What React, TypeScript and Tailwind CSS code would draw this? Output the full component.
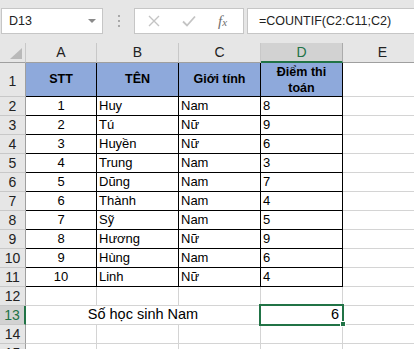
import React from 'react';

type Student = { stt: number; name: string; sex: string; score: number };

const students: Student[] = [
  { stt: 1, name: 'Huy', sex: 'Nam', score: 8 },
  { stt: 2, name: 'Tú', sex: 'Nữ', score: 9 },
  { stt: 3, name: 'Huyền', sex: 'Nữ', score: 6 },
  { stt: 4, name: 'Trung', sex: 'Nam', score: 3 },
  { stt: 5, name: 'Dũng', sex: 'Nam', score: 7 },
  { stt: 6, name: 'Thành', sex: 'Nam', score: 4 },
  { stt: 7, name: 'Sỹ', sex: 'Nam', score: 5 },
  { stt: 8, name: 'Hương', sex: 'Nữ', score: 9 },
  { stt: 9, name: 'Hùng', sex: 'Nam', score: 6 },
  { stt: 10, name: 'Linh', sex: 'Nữ', score: 4 },
];

const RowHead = ({ n, selected }: { n: number; selected?: boolean }) => (
  <div
    className={
      selected
        ? 'w-[26px] shrink-0 flex items-center justify-center border-b border-b-[#c8c8c8] border-r-2 border-r-[#217346] bg-[#d2d2d2] text-[#217346] text-[14px]'
        : 'w-[26px] shrink-0 flex items-center justify-center border-b border-b-[#c8c8c8] border-r border-r-[#9f9f9f] bg-[#e6e6e6] text-[#222] text-[14px]'
    }
  >
    {n}
  </div>
);

const ColHead = ({ label, w, selected }: { label: string; w: string; selected?: boolean }) => (
  <div
    className={`${w} shrink-0 flex items-center justify-center text-[14px] ${
      selected
        ? 'bg-[#d2d2d2] text-[#217346] border-b-2 border-b-[#217346] border-r border-r-[#ababab]'
        : 'bg-[#e6e6e6] text-[#222] border-b border-b-[#9f9f9f] border-r border-r-[#c8c8c8]'
    }`}
  >
    {label}
  </div>
);

const EmptyRow = ({ n }: { n: number }) => (
  <div className="flex h-[19px]">
    <RowHead n={n} />
    <div className="w-[71px] shrink-0 border-r border-b border-[#d4d4d4]" />
    <div className="w-[82px] shrink-0 border-r border-b border-[#d4d4d4]" />
    <div className="w-[82px] shrink-0 border-r border-b border-[#d4d4d4]" />
    <div className="w-[82px] shrink-0 border-r border-b border-[#d4d4d4]" />
    <div className="w-[80px] shrink-0 border-b border-[#d4d4d4]" />
  </div>
);

export default function App() {
  return (
    <div className="w-[414px] h-[349px] overflow-hidden bg-white font-['Liberation_Sans',Arial,sans-serif] text-black select-none">
      {/* formula bar */}
      <div className="h-[43px] bg-[#e6e6e6] flex items-start pt-[8px] pl-[1px]">
        <div className="w-[102px] h-[26px] bg-white border border-[#c6c6c6] flex items-center pl-[7px] pr-[6px] text-[12.5px] text-[#222]">
          <span className="flex-1">D13</span>
          <span className="w-0 h-0 border-l-[4px] border-r-[4px] border-t-[4px] border-l-transparent border-r-transparent border-t-[#8a8a8a]" />
        </div>
        <div className="w-[31px] h-[26px] flex flex-col items-center justify-center gap-[3px]">
          <span className="w-[2px] h-[2px] bg-[#a8a8a8]" />
          <span className="w-[2px] h-[2px] bg-[#a8a8a8]" />
          <span className="w-[2px] h-[2px] bg-[#a8a8a8]" />
        </div>
        <div className="w-[110px] h-[26px] bg-white border border-[#c6c6c6] flex items-center">
          <svg width="12" height="12" viewBox="0 0 12 12" className="ml-[13px]">
            <path d="M1 1 L11 11 M11 1 L1 11" stroke="#c4c4c4" strokeWidth="1.4" />
          </svg>
          <svg width="14" height="12" viewBox="0 0 14 12" className="ml-[22px]">
            <path d="M1 6.5 L5 10.5 L13 1.5" stroke="#c4c4c4" strokeWidth="1.8" fill="none" />
          </svg>
          <span className="ml-[22px] font-['Liberation_Serif',serif] italic text-[15px] text-[#6e6e6e] leading-none">
            f<span className="text-[11px]">x</span>
          </span>
        </div>
        <div className="flex-1 ml-[3px] h-[26px] bg-white border border-[#c6c6c6] border-r-0 flex items-center pl-[11px] text-[12.5px] text-[#222]">
          =COUNTIF(C2:C11;C2)
        </div>
      </div>

      {/* column headers */}
      <div className="flex h-[20px]">
        <div className="w-[26px] shrink-0 bg-[#e6e6e6] border-b border-b-[#9f9f9f] border-r border-r-[#c8c8c8] relative">
          <svg width="12" height="11" viewBox="0 0 12 11" className="absolute left-[10px] top-[5px]">
            <path d="M12 0 L12 11 L0 11 Z" fill="#b9b9b9" />
          </svg>
        </div>
        <ColHead label="A" w="w-[71px]" />
        <ColHead label="B" w="w-[82px]" />
        <ColHead label="C" w="w-[82px]" />
        <ColHead label="D" w="w-[82px]" selected />
        <ColHead label="E" w="w-[80px]" />
      </div>

      {/* row 1 - table header */}
      <div className="flex h-[34px]">
        <div className="w-[26px] shrink-0 flex items-end justify-center pb-[4px] border-b border-b-[#c8c8c8] border-r border-r-[#9f9f9f] bg-[#e6e6e6] text-[#222] text-[14px]">
          1
        </div>
        <div className="w-[71px] shrink-0 bg-[#8ea9db] border-r border-b border-black flex items-center justify-center font-bold text-[12.5px]">
          STT
        </div>
        <div className="w-[82px] shrink-0 bg-[#8ea9db] border-r border-b border-black flex items-center justify-center font-bold text-[12.5px]">
          TÊN
        </div>
        <div className="w-[82px] shrink-0 bg-[#8ea9db] border-r border-b border-black flex items-center justify-center font-bold text-[12.5px]">
          Giới tính
        </div>
        <div className="w-[82px] shrink-0 bg-[#8ea9db] border-r border-b border-black flex items-center justify-center text-center font-bold text-[12.5px] leading-[16px]">
          Điểm thi
          <br />
          toán
        </div>
        <div className="w-[80px] shrink-0 border-b border-[#d4d4d4]" />
      </div>

      {/* data rows */}
      {students.map((s, i) => (
        <div key={s.stt} className="flex h-[19px] text-[13px]">
          <RowHead n={i + 2} />
          <div className="w-[71px] shrink-0 border-r border-b border-black flex items-center justify-center">{s.stt}</div>
          <div className="w-[82px] shrink-0 border-r border-b border-black flex items-center pl-[2px]">{s.name}</div>
          <div className="w-[82px] shrink-0 border-r border-b border-black flex items-center pl-[2px]">{s.sex}</div>
          <div className="w-[82px] shrink-0 border-r border-b border-black flex items-center pl-[2px]">{s.score}</div>
          <div className="w-[80px] shrink-0 border-b border-[#d4d4d4]" />
        </div>
      ))}

      <EmptyRow n={12} />

      {/* row 13: merged label + selected result cell */}
      <div className="flex h-[19px]">
        <RowHead n={13} selected />
        <div className="w-[235px] shrink-0 border-r border-b border-[#d4d4d4] flex items-center justify-center text-[14.5px]">
          Số học sinh Nam
        </div>
        <div className="w-[82px] shrink-0 border-r border-b border-[#d4d4d4] relative flex items-center justify-end pr-[3px] text-[14.5px]">
          6
          <div className="absolute -left-[2px] -top-[2px] w-[85px] h-[22px] border-2 border-[#217346]" />
          <div className="absolute -right-[4px] -bottom-[3px] w-[6px] h-[6px] bg-[#217346] border border-white" />
        </div>
        <div className="w-[80px] shrink-0 border-b border-[#d4d4d4]" />
      </div>

      <EmptyRow n={14} />
      <EmptyRow n={15} />
    </div>
  );
}
